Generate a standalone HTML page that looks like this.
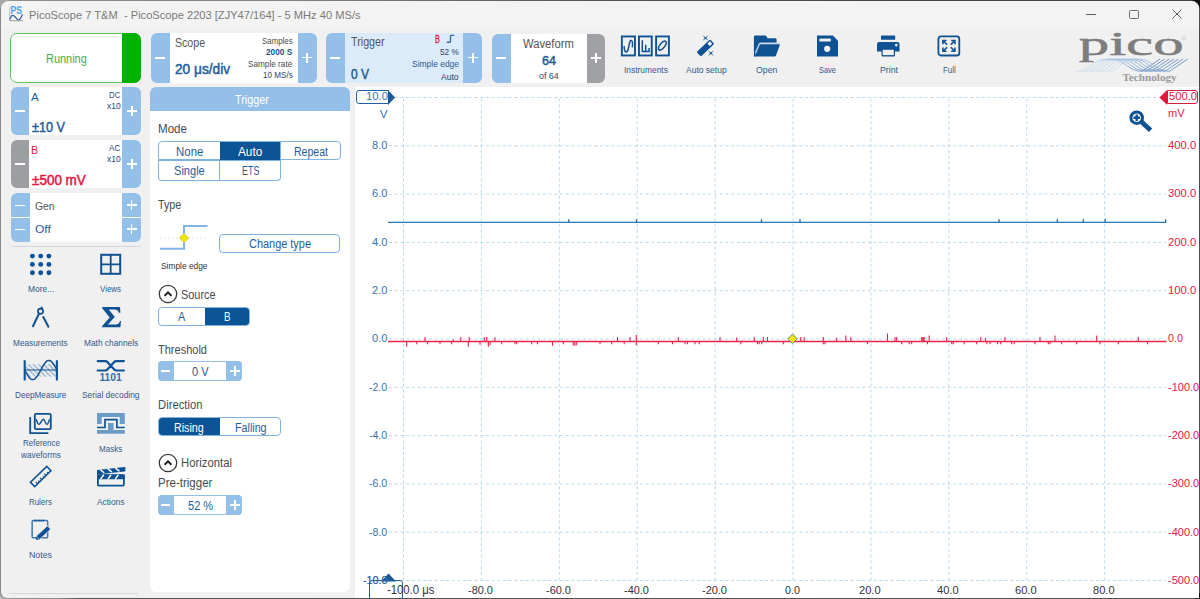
<!DOCTYPE html><html><head><meta charset="utf-8"><style>
html,body{margin:0;padding:0;width:1200px;height:599px;overflow:hidden;background:#1b1b1b}
.r{position:absolute}
.t{position:absolute;white-space:nowrap}
svg text{font-family:"Liberation Sans",sans-serif}
</style></head><body>
<div class="r" style="left:0;top:0;width:1200px;height:599px;background:linear-gradient(90deg,#a9a9a9 0px,#8a8a8a 300px,#303030 600px,#141414 900px,#111 1200px)"></div>
<div class="r" style="left:0;top:597px;width:1200px;height:2px;background:linear-gradient(90deg,#b9b9b9 0px,#9a9a9a 60px,#333 80px,#2a2a2a 1200px)"></div>
<div class="r" style="left:1px;top:1px;width:1198px;height:596.5px;background:#f0f0f0;border-radius:8px 8px 6px 6px;overflow:hidden;box-shadow:0 0 0 0.6px #777">
<div class="r" style="left:0;top:0;width:1198px;height:27.5px;background:#f3f3f3"></div>
</div>
<svg class="r" style="left:9px;top:6px;" width="15" height="16" viewBox="0 0 15 16"><rect x="0.2" y="1" width="1.2" height="13.5" fill="#c3cad6"/><text x="1.4" y="7.7" style="font-weight:700;font-size:10px" fill="#4ea4e6" textLength="11.6" lengthAdjust="spacingAndGlyphs">PS</text><path d="M0.8 13.6 Q2.5 8.4 4.5 9.5 Q6.5 11 8.5 13.7 Q10.5 15.5 13.5 8.3" stroke="#3f5e96" stroke-width="1.2" fill="none"/><rect x="0.5" y="14.2" width="13.5" height="1" fill="#a0a0a0"/></svg>
<div class="t" style="left:28.70px;top:9.67px;font-size:11.5px;line-height:11.5px;color:#7a7a7a;font-weight:400;font-family:'Liberation Sans', sans-serif;transform:scaleX(0.9665);transform-origin:0 0;">PicoScope 7 T&amp;M &nbsp;- PicoScope 2203 [ZJY47/164] - 5 MHz 40 MS/s</div>
<div class="r" style="left:1086px;top:14px;width:10px;height:1px;background:#5f5f5f;"></div>
<div class="r" style="left:1129px;top:9.5px;width:7.5px;height:7.5px;border:1px solid #6a6a6a;border-radius:1.5px"></div>
<svg class="r" style="left:1172px;top:9px;" width="10" height="10" viewBox="0 0 10 10"><path d="M0.5 0.5 L9.5 9.5 M9.5 0.5 L0.5 9.5" stroke="#5f5f5f" stroke-width="1"/></svg>
<div class="r" style="left:10px;top:33px;width:131px;height:50px;border-radius:7px;overflow:hidden;background:#fff;box-sizing:border-box;border:1.5px solid #5fc65f"></div>
<div class="r" style="left:122px;top:33px;width:19px;height:50px;border-radius:0 7px 7px 0;background:#00b200"></div>
<div class="t" style="left:46.30px;top:52.94px;font-size:12px;line-height:12px;color:#3db43d;font-weight:400;font-family:'Liberation Sans', sans-serif;transform:scaleX(0.9128);transform-origin:0 0;">Running</div>
<div class="r" style="left:151px;top:33px;width:165.5px;height:50px;border-radius:6px;overflow:hidden;background:#fff"><div class="r" style="left:0;top:0;width:19px;height:50px;background:#93bfe9"></div><div class="r" style="left:146.5px;top:0;width:19px;height:50px;background:#93bfe9"></div></div>
<div class="r" style="left:155.3px;top:56.849999999999994px;width:10px;height:1.9px;background:#fff;"></div>
<div class="r" style="left:302.0px;top:56.55px;width:10px;height:1.9px;background:#fff;"></div>
<div class="r" style="left:306.05px;top:52.5px;width:1.9px;height:10px;background:#fff;"></div>
<div class="t" style="left:174.70px;top:37.34px;font-size:12px;line-height:12px;color:#555;font-weight:400;font-family:'Liberation Sans', sans-serif;transform:scaleX(0.8824);transform-origin:0 0;">Scope</div>
<div class="t" style="left:174.70px;top:62.25px;font-size:14px;line-height:14px;color:#1f5c9a;font-weight:400;font-family:'Liberation Sans', sans-serif;transform:scaleX(0.9769);transform-origin:0 0;-webkit-text-stroke:0.5px #1f5c9a;">20 μs/div</div>
<div class="t" style="left:261.70px;top:36.36px;font-size:9.5px;line-height:9.5px;color:#4a4a4a;font-weight:400;font-family:'Liberation Sans', sans-serif;transform:scaleX(0.8297);transform-origin:0 0;">Samples</div>
<div class="t" style="left:266.20px;top:47.26px;font-size:9.5px;line-height:9.5px;color:#1d4f85;font-weight:700;font-family:'Liberation Sans', sans-serif;transform:scaleX(0.8704);transform-origin:0 0;">2000 S</div>
<div class="t" style="left:248.20px;top:58.56px;font-size:9.5px;line-height:9.5px;color:#4a4a4a;font-weight:400;font-family:'Liberation Sans', sans-serif;transform:scaleX(0.8633);transform-origin:0 0;">Sample rate</div>
<div class="t" style="left:262.70px;top:69.76px;font-size:9.5px;line-height:9.5px;color:#2b4468;font-weight:400;font-family:'Liberation Sans', sans-serif;transform:scaleX(0.8534);transform-origin:0 0;">10 MS/s</div>
<div class="r" style="left:326px;top:33px;width:156.2px;height:50px;border-radius:6px;overflow:hidden;background:#dcebf9"><div class="r" style="left:0;top:0;width:19px;height:50px;background:#93bfe9"></div><div class="r" style="left:137.2px;top:0;width:19px;height:50px;background:#93bfe9"></div></div>
<div class="r" style="left:330.3px;top:56.849999999999994px;width:10px;height:1.9px;background:#fff;"></div>
<div class="r" style="left:467.8px;top:56.55px;width:10px;height:1.9px;background:#fff;"></div>
<div class="r" style="left:471.85px;top:52.5px;width:1.9px;height:10px;background:#fff;"></div>
<div class="t" style="left:350.70px;top:36.34px;font-size:12px;line-height:12px;color:#555;font-weight:400;font-family:'Liberation Sans', sans-serif;transform:scaleX(0.8963);transform-origin:0 0;">Trigger</div>
<div class="t" style="left:350.70px;top:67.45px;font-size:14px;line-height:14px;color:#1f5c9a;font-weight:400;font-family:'Liberation Sans', sans-serif;transform:scaleX(0.8571);transform-origin:0 0;-webkit-text-stroke:0.5px #1f5c9a;">0 V</div>
<div class="t" style="left:435.10px;top:34.80px;font-size:10.4px;line-height:10.4px;color:#e8103c;font-weight:400;font-family:'Liberation Sans', sans-serif;transform:scaleX(0.6957);transform-origin:0 0;-webkit-text-stroke:0.3px #e8103c;">B</div>
<svg class="r" style="left:446px;top:34px;" width="10" height="10" viewBox="0 0 10 10"><path d="M1.3 8.2 H3.9 Q4.5 8.2 4.5 7.6 V2 Q4.5 1.4 5.1 1.4 H7.7" stroke="#386ca4" stroke-width="1.4" fill="none" stroke-linecap="round"/></svg>
<div class="t" style="left:440.00px;top:47.26px;font-size:9.5px;line-height:9.5px;color:#2b4468;font-weight:400;font-family:'Liberation Sans', sans-serif;transform:scaleX(0.8618);transform-origin:0 0;">52 %</div>
<div class="t" style="left:411.70px;top:59.26px;font-size:9.5px;line-height:9.5px;color:#2b5a8a;font-weight:400;font-family:'Liberation Sans', sans-serif;transform:scaleX(0.8902);transform-origin:0 0;">Simple edge</div>
<div class="t" style="left:441.20px;top:72.06px;font-size:9.5px;line-height:9.5px;color:#2b4468;font-weight:400;font-family:'Liberation Sans', sans-serif;transform:scaleX(0.8974);transform-origin:0 0;">Auto</div>
<div class="r" style="left:492px;top:33.6px;width:113.2px;height:49.5px;border-radius:6px;overflow:hidden;background:#fff"><div class="r" style="left:0;top:0;width:19px;height:49.5px;background:#93bfe9"></div><div class="r" style="left:94.7px;top:0;width:18.5px;height:49.5px;background:#a0a1a5"></div></div>
<div class="r" style="left:496.3px;top:57.05px;width:10px;height:1.9px;background:#fff;"></div>
<div class="r" style="left:591.2px;top:57.05px;width:10px;height:1.9px;background:#fff;"></div>
<div class="r" style="left:595.25px;top:53.0px;width:1.9px;height:10px;background:#fff;"></div>
<div class="t" style="left:523.20px;top:38.24px;font-size:12px;line-height:12px;color:#555;font-weight:400;font-family:'Liberation Sans', sans-serif;transform:scaleX(0.9373);transform-origin:0 0;">Waveform</div>
<div class="t" style="left:541.60px;top:53.57px;font-size:13.5px;line-height:13.5px;color:#1f5c9a;font-weight:400;font-family:'Liberation Sans', sans-serif;transform:scaleX(0.9333);transform-origin:0 0;-webkit-text-stroke:0.5px #1f5c9a;">64</div>
<div class="t" style="left:538.80px;top:70.56px;font-size:9.5px;line-height:9.5px;color:#2b4468;font-weight:400;font-family:'Liberation Sans', sans-serif;transform:scaleX(0.9289);transform-origin:0 0;">of 64</div>
<div class="t" style="left:623.50px;top:64.87px;font-size:9.6px;line-height:9.6px;color:#33598a;font-weight:400;font-family:'Liberation Sans', sans-serif;transform:scaleX(0.8745);transform-origin:0 0;">Instruments</div>
<div class="t" style="left:685.80px;top:64.87px;font-size:9.6px;line-height:9.6px;color:#33598a;font-weight:400;font-family:'Liberation Sans', sans-serif;transform:scaleX(0.8867);transform-origin:0 0;">Auto setup</div>
<div class="t" style="left:756.00px;top:64.87px;font-size:9.6px;line-height:9.6px;color:#33598a;font-weight:400;font-family:'Liberation Sans', sans-serif;transform:scaleX(0.9106);transform-origin:0 0;">Open</div>
<div class="t" style="left:819.00px;top:64.87px;font-size:9.6px;line-height:9.6px;color:#33598a;font-weight:400;font-family:'Liberation Sans', sans-serif;transform:scaleX(0.7763);transform-origin:0 0;">Save</div>
<div class="t" style="left:879.50px;top:64.87px;font-size:9.6px;line-height:9.6px;color:#33598a;font-weight:400;font-family:'Liberation Sans', sans-serif;transform:scaleX(0.9086);transform-origin:0 0;">Print</div>
<div class="t" style="left:942.60px;top:64.87px;font-size:9.6px;line-height:9.6px;color:#33598a;font-weight:400;font-family:'Liberation Sans', sans-serif;transform:scaleX(0.8194);transform-origin:0 0;">Full</div>
<svg class="r" style="left:620px;top:35px;" width="51" height="22" viewBox="0 0 51 22"><g fill="none" stroke="#0f5294" stroke-width="1.9"><rect x="1.85" y="1.45" width="13.1" height="19"/><rect x="18.95" y="1.45" width="12.8" height="19"/><rect x="36.1" y="1.45" width="12.8" height="19"/><path d="M4.1 11 C4.3 19 7.5 18.5 8.7 12 C9.5 7 10.3 5 11.3 5.2 C12.5 5.4 12.6 9 12.4 12.4" stroke-width="1.5"/><path d="M22.3 16.6 V5.2 M25.7 16.6 V9.7 M29.1 16.6 V13.1 M21.6 16.6 H29.8" stroke-width="1.5"/><ellipse cx="42.4" cy="10.6" rx="5.3" ry="2.4" transform="rotate(-52 42.4 10.6)" stroke-width="1.6"/></g></svg>
<svg class="r" style="left:695px;top:34px;" width="22" height="24" viewBox="0 0 22 24"><g transform="translate(10.4 13.9) rotate(-43.6)"><rect x="-9.3" y="-3.1" width="18.6" height="6.2" rx="1.3" fill="#0f5294"/><rect x="4.4" y="-1.7" width="3.4" height="3.4" rx="0.7" fill="#fff"/></g><g fill="#0f5294"><path d="M10.5 4 m-2.8 -2.8 L10.5 3.2 L13.3 1.2 L11.3 4 L13.3 6.8 L10.5 4.8 L7.7 6.8 L9.7 4 Z"/><path d="M15.9 19.2 m-2.8 -2.8 L15.9 18.4 L18.7 16.4 L16.7 19.2 L18.7 22 L15.9 20 L13.1 22 L15.1 19.2 Z"/></g></svg>
<svg class="r" style="left:753px;top:35px;" width="28" height="22" viewBox="0 0 28 22"><path d="M0.9 1.6 Q0.9 0.6 1.9 0.6 H12.3 Q13.1 0.6 13.6 1.4 L14.5 3.3 H22.4 Q23.6 3.3 23.6 4.5 V8 H7 L2.6 19 L2.6 21.4 H0.9 Z" fill="#0f5294"/><path d="M2.4 18 L6.1 9.3 Q6.6 8.2 7.8 8.2 H26.6" stroke="#c3d3e4" stroke-width="1.3" fill="none"/><path d="M7.9 9.2 H26.2 Q27.1 9.2 26.8 10.1 L23 20.6 Q22.7 21.4 21.9 21.4 H1.9 L6.6 10 Q7 9.2 7.9 9.2 Z" fill="#0f5294"/></svg>
<svg class="r" style="left:817px;top:35px;" width="22" height="22" viewBox="0 0 22 22"><path d="M0 0.4 H15.8 L21 5.8 V21.4 H0 Z" fill="#0f5294"/><rect x="2.4" y="3.6" width="11.4" height="2.9" fill="#f2f2f2"/><circle cx="10.2" cy="13.8" r="3.1" fill="#f2f2f2"/></svg>
<svg class="r" style="left:876px;top:35px;" width="24" height="22" viewBox="0 0 24 22"><rect x="5" y="0.5" width="14.2" height="4.3" rx="0.6" fill="#0f5294"/><path d="M1 9.2 Q1 7 3.2 7 H21.3 Q23.5 7 23.5 9.2 V16.6 H1 Z" fill="#0f5294"/><rect x="5.5" y="13.6" width="13.5" height="7.8" rx="0.8" fill="#0f5294"/><rect x="6.7" y="14.8" width="11.1" height="5.3" fill="#f0f0f0"/><circle cx="20.3" cy="10.1" r="1.3" fill="#f0f0f0"/></svg>
<svg class="r" style="left:937px;top:35px;" width="24" height="22" viewBox="0 0 24 22"><rect x="1.4" y="1.3" width="20.9" height="19.2" rx="2.6" fill="none" stroke="#0f5294" stroke-width="1.8"/><g stroke="#0f5294" stroke-width="1.6" fill="none"><path d="M6.2 5.8 L10 9.6 M5.9 9.2 V5.5 H9.6"/><path d="M17.6 5.8 L13.8 9.6 M17.9 9.2 V5.5 H14.2"/><path d="M6.2 16 L10 12.2 M5.9 12.6 V16.3 H9.6"/><path d="M17.6 16 L13.8 12.2 M17.9 12.6 V16.3 H14.2"/></g></svg>
<svg class="r" style="left:1072px;top:30px;" width="120" height="56" viewBox="0 0 120 56"><defs><linearGradient id="wg" x1="0" y1="0" x2="1" y2="0" gradientUnits="objectBoundingBox"><stop offset="0" stop-color="#d5e4f3"/><stop offset="0.45" stop-color="#8fb6e0"/><stop offset="1" stop-color="#3f6fa8"/></linearGradient></defs><text x="6.7" y="24.8" style="font-family:'Liberation Serif';font-weight:400;font-size:34px" fill="#7d7d7d" stroke="#7d7d7d" stroke-width="0.5" textLength="105" lengthAdjust="spacingAndGlyphs">pico</text><circle cx="112" cy="8.5" r="1.6" fill="none" stroke="#b0b0b0" stroke-width="0.5"/><g fill="none" stroke-width="0.75"><path d="M2.0 41.7 C18.0 41.7 22.0 29.2 33.0 29.2 H40.0 C52.0 29.2 56.0 41.3 70.0 41.3 L88.0 29" stroke="url(#wg)"/><path d="M7.5 41.7 C22.6 41.7 26.6 29.2 37.6 29.2 H44.6 C56.6 29.2 60.6 41.3 74.6 41.3 L92.6 29" stroke="url(#wg)"/><path d="M13.0 41.7 C27.2 41.7 31.2 29.2 42.2 29.2 H49.2 C61.2 29.2 65.2 41.3 79.2 41.3 L97.2 29" stroke="url(#wg)"/><path d="M18.6 41.7 C31.8 41.7 35.8 29.2 46.8 29.2 H53.8 C65.8 29.2 69.8 41.3 83.8 41.3 L101.8 29" stroke="url(#wg)"/><path d="M24.1 41.7 C36.4 41.7 40.4 29.2 51.4 29.2 H58.4 C70.4 29.2 74.4 41.3 88.4 41.3 L106.4 29" stroke="url(#wg)"/><path d="M29.6 41.7 C41.0 41.7 45.0 29.2 56.0 29.2 H63.0 C75.0 29.2 79.0 41.3 93.0 41.3 L111.0 29" stroke="url(#wg)"/><path d="M35.1 41.7 C45.6 41.7 49.6 29.2 60.6 29.2 H67.6 C79.6 29.2 83.6 41.3 97.6 41.3 L115.6 29" stroke="url(#wg)"/></g><text x="50.4" y="51" style="font-family:'Liberation Serif';font-weight:700;font-size:9.6px" fill="#9b9b9b" textLength="54.3" lengthAdjust="spacingAndGlyphs">Technology</text></svg>
<div class="r" style="left:10.5px;top:87.1px;width:130.5px;height:48.2px;border-radius:6px;overflow:hidden;background:#fff"><div class="r" style="left:0;top:0;width:18.5px;height:48.2px;background:#93bfe9"></div><div class="r" style="left:111.3px;top:0;width:19.2px;height:48.2px;background:#93bfe9"></div></div>
<div class="r" style="left:14.899999999999999px;top:110.35px;width:10px;height:1.9px;background:#fff;"></div>
<div class="r" style="left:126.69999999999999px;top:110.35px;width:10px;height:1.9px;background:#fff;"></div>
<div class="r" style="left:130.75px;top:106.3px;width:1.9px;height:10px;background:#fff;"></div>
<div class="t" style="left:31.25px;top:92.37px;font-size:11.5px;line-height:11.5px;color:#1f5c9a;font-weight:400;font-family:'Liberation Sans', sans-serif;transform:scaleX(1.0065);transform-origin:0 0;">A</div>
<div class="t" style="left:109.35px;top:90.31px;font-size:9.5px;line-height:9.5px;color:#2a4d75;font-weight:400;font-family:'Liberation Sans', sans-serif;transform:scaleX(0.8212);transform-origin:0 0;">DC</div>
<div class="t" style="left:106.85px;top:100.96px;font-size:9.5px;line-height:9.5px;color:#2a4d75;font-weight:400;font-family:'Liberation Sans', sans-serif;transform:scaleX(0.8987);transform-origin:0 0;">x10</div>
<div class="t" style="left:32.25px;top:120.25px;font-size:14px;line-height:14px;color:#1f5c9a;font-weight:400;font-family:'Liberation Sans', sans-serif;transform:scaleX(0.9041);transform-origin:0 0;-webkit-text-stroke:0.5px #1f5c9a;">±10 V</div>
<div class="r" style="left:10.5px;top:140.1px;width:130.5px;height:48.2px;border-radius:6px;overflow:hidden;background:#fff"><div class="r" style="left:0;top:0;width:18.5px;height:48.2px;background:#9d9ea2"></div><div class="r" style="left:111.3px;top:0;width:19.2px;height:48.2px;background:#93bfe9"></div></div>
<div class="r" style="left:14.899999999999999px;top:163.35px;width:10px;height:1.9px;background:#fff;"></div>
<div class="r" style="left:126.69999999999999px;top:163.35px;width:10px;height:1.9px;background:#fff;"></div>
<div class="r" style="left:130.75px;top:159.29999999999998px;width:1.9px;height:10px;background:#fff;"></div>
<div class="t" style="left:31.25px;top:145.37px;font-size:11.5px;line-height:11.5px;color:#e3173e;font-weight:400;font-family:'Liberation Sans', sans-serif;transform:scaleX(0.9351);transform-origin:0 0;">B</div>
<div class="t" style="left:109.35px;top:143.31px;font-size:9.5px;line-height:9.5px;color:#2a4d75;font-weight:400;font-family:'Liberation Sans', sans-serif;transform:scaleX(0.8523);transform-origin:0 0;">AC</div>
<div class="t" style="left:106.85px;top:153.96px;font-size:9.5px;line-height:9.5px;color:#2a4d75;font-weight:400;font-family:'Liberation Sans', sans-serif;transform:scaleX(0.8987);transform-origin:0 0;">x10</div>
<div class="t" style="left:32.00px;top:172.85px;font-size:14px;line-height:14px;color:#e3173e;font-weight:400;font-family:'Liberation Sans', sans-serif;transform:scaleX(0.9624);transform-origin:0 0;-webkit-text-stroke:0.5px #e3173e;">±500 mV</div>
<div class="r" style="left:10.5px;top:193.3px;width:130.5px;height:48.4px;border-radius:6px;overflow:hidden;background:#fff"><div class="r" style="left:0;top:0;width:19.2px;height:48.4px;background:#93bfe9"></div><div class="r" style="left:111.3px;top:0;width:19.2px;height:48.4px;background:#93bfe9"></div></div>
<div class="r" style="left:10.5px;top:217.2px;width:19.2px;height:1px;background:#fff;"></div>
<div class="r" style="left:121.8px;top:217.2px;width:19.2px;height:1px;background:#fff;"></div>
<div class="r" style="left:15.3px;top:204.55px;width:10px;height:1.9px;background:#fff;"></div>
<div class="r" style="left:126.5px;top:204.35000000000002px;width:10px;height:1.9px;background:#fff;"></div>
<div class="r" style="left:130.55px;top:200.3px;width:1.9px;height:10px;background:#fff;"></div>
<div class="r" style="left:15.3px;top:228.55px;width:10px;height:1.9px;background:#fff;"></div>
<div class="r" style="left:126.5px;top:228.35000000000002px;width:10px;height:1.9px;background:#fff;"></div>
<div class="r" style="left:130.55px;top:224.3px;width:1.9px;height:10px;background:#fff;"></div>
<div class="t" style="left:34.75px;top:201.37px;font-size:11.5px;line-height:11.5px;color:#555;font-weight:400;font-family:'Liberation Sans', sans-serif;transform:scaleX(0.9032);transform-origin:0 0;">Gen</div>
<div class="t" style="left:34.75px;top:224.47px;font-size:11.5px;line-height:11.5px;color:#1f5c9a;font-weight:400;font-family:'Liberation Sans', sans-serif;transform:scaleX(1.0461);transform-origin:0 0;">Off</div>
<div class="r" style="left:12px;top:246px;width:129px;height:1.2px;background:#d6d6d6;"></div>
<div class="t" style="left:27.50px;top:284.06px;font-size:9.5px;line-height:9.5px;color:#33598a;font-weight:400;font-family:'Liberation Sans', sans-serif;transform:scaleX(0.8885);transform-origin:0 0;">More...</div>
<div class="t" style="left:100.20px;top:284.06px;font-size:9.5px;line-height:9.5px;color:#33598a;font-weight:400;font-family:'Liberation Sans', sans-serif;transform:scaleX(0.8333);transform-origin:0 0;">Views</div>
<div class="t" style="left:13.20px;top:337.66px;font-size:9.5px;line-height:9.5px;color:#33598a;font-weight:400;font-family:'Liberation Sans', sans-serif;transform:scaleX(0.8694);transform-origin:0 0;">Measurements</div>
<div class="t" style="left:83.60px;top:337.66px;font-size:9.5px;line-height:9.5px;color:#33598a;font-weight:400;font-family:'Liberation Sans', sans-serif;transform:scaleX(0.8770);transform-origin:0 0;">Math channels</div>
<div class="t" style="left:15.10px;top:390.16px;font-size:9.5px;line-height:9.5px;color:#33598a;font-weight:400;font-family:'Liberation Sans', sans-serif;transform:scaleX(0.8610);transform-origin:0 0;">DeepMeasure</div>
<div class="t" style="left:82.00px;top:390.16px;font-size:9.5px;line-height:9.5px;color:#33598a;font-weight:400;font-family:'Liberation Sans', sans-serif;transform:scaleX(0.8763);transform-origin:0 0;">Serial decoding</div>
<div class="t" style="left:22.50px;top:438.06px;font-size:9.5px;line-height:9.5px;color:#33598a;font-weight:400;font-family:'Liberation Sans', sans-serif;transform:scaleX(0.8447);transform-origin:0 0;">Reference</div>
<div class="t" style="left:21.09px;top:449.56px;font-size:9.5px;line-height:9.5px;color:#33598a;font-weight:400;font-family:'Liberation Sans', sans-serif;transform:scaleX(0.8696);transform-origin:0 0;">waveforms</div>
<div class="t" style="left:99.00px;top:443.66px;font-size:9.5px;line-height:9.5px;color:#33598a;font-weight:400;font-family:'Liberation Sans', sans-serif;transform:scaleX(0.8504);transform-origin:0 0;">Masks</div>
<div class="t" style="left:29.30px;top:496.76px;font-size:9.5px;line-height:9.5px;color:#33598a;font-weight:400;font-family:'Liberation Sans', sans-serif;transform:scaleX(0.8327);transform-origin:0 0;">Rulers</div>
<div class="t" style="left:97.20px;top:496.76px;font-size:9.5px;line-height:9.5px;color:#33598a;font-weight:400;font-family:'Liberation Sans', sans-serif;transform:scaleX(0.8814);transform-origin:0 0;">Actions</div>
<div class="t" style="left:29.30px;top:549.96px;font-size:9.5px;line-height:9.5px;color:#33598a;font-weight:400;font-family:'Liberation Sans', sans-serif;transform:scaleX(0.9234);transform-origin:0 0;">Notes</div>
<svg class="r" style="left:29px;top:253px;" width="24" height="23" viewBox="0 0 24 23"><circle cx="3.4" cy="3.1" r="2.45" fill="#0f5294"/><circle cx="3.4" cy="11.4" r="2.45" fill="#0f5294"/><circle cx="3.4" cy="19.7" r="2.45" fill="#0f5294"/><circle cx="11.7" cy="3.1" r="2.45" fill="#0f5294"/><circle cx="11.7" cy="11.4" r="2.45" fill="#0f5294"/><circle cx="11.7" cy="19.7" r="2.45" fill="#0f5294"/><circle cx="19.9" cy="3.1" r="2.45" fill="#0f5294"/><circle cx="19.9" cy="11.4" r="2.45" fill="#0f5294"/><circle cx="19.9" cy="19.7" r="2.45" fill="#0f5294"/></svg>
<svg class="r" style="left:99px;top:253px;" width="24" height="23" viewBox="0 0 24 23"><rect x="2.2" y="1.8" width="19" height="19" fill="none" stroke="#0f5294" stroke-width="2"/><path d="M11.7 1.8 V20.8 M2.2 11.3 H21.2" stroke="#0f5294" stroke-width="1.8"/></svg>
<svg class="r" style="left:30px;top:306px;" width="21" height="23" viewBox="0 0 21 23"><circle cx="10.5" cy="5.3" r="2.6" fill="none" stroke="#0f5294" stroke-width="1.7"/><path d="M8.8 8 L3 20.3 M13.3 11 L18.4 20.8 M11.6 1.6 L12.1 2.8" stroke="#0f5294" stroke-width="2" stroke-linecap="round"/></svg>
<svg class="r" style="left:101px;top:306px;" width="21" height="23" viewBox="0 0 21 23"><path d="M1.2 1 H19 L19.4 6.8 H17.8 Q17 3.6 13.5 3.6 H7.8 L13.8 11 L6.8 18.6 H14.5 Q18 18.6 19 15 H20 L19.4 21.3 H1 V20.3 L8.7 11.6 L1.2 2.2 Z" fill="#0f5294"/></svg>
<svg class="r" style="left:22px;top:359px;" width="37" height="23" viewBox="0 0 37 23"><defs><pattern id="hp" width="3.6" height="3.6" patternUnits="userSpaceOnUse" patternTransform="rotate(-45)"><rect width="1.3" height="3.6" fill="#93b1d3"/></pattern></defs><rect x="3.7" y="5.2" width="31" height="12.4" fill="url(#hp)"/><path d="M2.7 1.2 V21.5 M34.9 1.2 V21.5" stroke="#0f5294" stroke-width="2.1"/><path d="M2.7 11 H34.9" stroke="#0f5294" stroke-width="1.1"/><polyline points="2.70,11.00 3.50,12.50 4.31,13.97 5.12,15.36 5.92,16.64 6.72,17.79 7.53,18.77 8.33,19.55 9.14,20.13 9.95,20.48 10.75,20.60 11.55,20.48 12.36,20.13 13.16,19.55 13.97,18.77 14.77,17.79 15.58,16.64 16.38,15.36 17.19,13.97 17.99,12.50 18.80,11.00 19.60,9.50 20.41,8.03 21.21,6.64 22.02,5.36 22.82,4.21 23.63,3.23 24.43,2.45 25.24,1.87 26.04,1.52 26.85,1.40 27.65,1.52 28.46,1.87 29.26,2.45 30.07,3.23 30.87,4.21 31.68,5.36 32.48,6.64 33.29,8.03 34.09,9.50 34.90,11.00" stroke="#0f5294" stroke-width="1.5" fill="none"/></svg>
<svg class="r" style="left:96px;top:359px;" width="30" height="23" viewBox="0 0 30 23"><path d="M1.7 2.1 H9.5 Q10.6 2.1 11.6 3.2 L18 10.3 Q19 11.5 20.2 11.5 H27.9 M1.7 11.5 H9.5 Q10.6 11.5 11.6 10.3 L18 3.2 Q19 2.1 20.2 2.1 H27.9" stroke="#0f5294" stroke-width="2.2" fill="none" stroke-linecap="round"/><text x="3.4" y="21.5" style="font-weight:700;font-size:10.2px" fill="#2f6dab" textLength="22.2" lengthAdjust="spacingAndGlyphs">1101</text></svg>
<svg class="r" style="left:28px;top:412px;" width="26" height="23" viewBox="0 0 26 23"><rect x="6.8" y="1.9" width="16" height="15.3" rx="1.2" fill="none" stroke="#0f5294" stroke-width="1.8"/><path d="M2.2 5 V21.1 H20.4" fill="none" stroke="#0f5294" stroke-width="1.8"/><path d="M7.6 6.9 C8.6 6.9 9.6 12.5 10.9 12.5 C12.4 12.5 13.8 7.3 15.3 7.3 C16.8 7.3 17.6 12.5 19 12.5 C20.4 12.5 21 7.3 21.8 7.3" fill="none" stroke="#0f5294" stroke-width="1.5"/></svg>
<svg class="r" style="left:96px;top:413px;" width="30" height="21" viewBox="0 0 30 21"><path d="M1 0 H28.8 V11 H23.7 V4 H5.7 V11 H1 Z" fill="#6b9cc7"/><path d="M1 17.1 H28.8 V20.8 H1 Z M12 9.9 H17.6 V17.1 H12 Z" fill="#6b9cc7"/><path d="M1 14.5 H9 V6.6 H20.9 V14.5 H28.8" stroke="#0f5294" stroke-width="1.7" fill="none"/></svg>
<svg class="r" style="left:29px;top:465px;" width="24" height="23" viewBox="0 0 24 23"><g transform="translate(11.7 11.5) rotate(-44.5)"><rect x="-11.4" y="-3" width="22.8" height="6" fill="none" stroke="#0f5294" stroke-width="1.6"/><path d="M-7.5 3 V0.6 M-4.5 3 V1.4 M-1.5 3 V0.6 M1.5 3 V1.4 M4.5 3 V0.6 M7.5 3 V1.4" stroke="#0f5294" stroke-width="1.2"/></g></svg>
<svg class="r" style="left:95px;top:465px;" width="31" height="23" viewBox="0 0 31 23"><rect x="2.9" y="10.2" width="26" height="10.4" rx="1" fill="none" stroke="#0f5294" stroke-width="1.8"/><rect x="2" y="9.4" width="27.8" height="4.9" rx="0.8" fill="#0f5294"/><path d="M2 4.9 L29.6 1.9 Q30.4 1.8 30.4 2.8 L30.4 5.6 Q30.4 6.4 29.6 6.5 L2 9.5 Z" fill="#0f5294"/><path d="M6 13.6 L8.4 10.2 M13.3 13.6 L15.7 10.2 M20.6 13.6 L23 10.2" stroke="#fff" stroke-width="1.5" stroke-linecap="round"/><path d="M5.6 5 L8.8 7.5 M13.2 4.2 L16.4 6.7 M20.8 3.4 L24 5.9" stroke="#fff" stroke-width="1.5" stroke-linecap="round"/></svg>
<svg class="r" style="left:30px;top:518px;" width="22" height="23" viewBox="0 0 22 23"><rect x="2.15" y="2.45" width="15.5" height="17.4" rx="1.2" fill="none" stroke="#3d78b3" stroke-width="1.5"/><path d="M4 2.6 H15" stroke="#0f5294" stroke-width="1.6" stroke-dasharray="1.4 0.8"/><g transform="translate(13.2 14.9) rotate(-43)"><rect x="-7.5" y="-2.4" width="15.5" height="4.8" rx="0.8" fill="#0f5294" stroke="#f0f0f0" stroke-width="0.8"/><path d="M-7.8 -2.2 L-10 0 L-7.8 2.2 Z" fill="#0f5294"/></g></svg>
<div class="r" style="left:8.5px;top:593px;width:129.5px;height:1.2px;background:#d8d8d8;"></div>
<div class="r" style="left:150px;top:87.3px;width:200px;height:504.4px;background:#fff;border-radius:6px;overflow:hidden"><div class="r" style="left:0;top:0;width:200px;height:23.3px;background:#93bfe9"></div></div>
<div class="t" style="left:234.50px;top:93.74px;font-size:12px;line-height:12px;color:#fff;font-weight:400;font-family:'Liberation Sans', sans-serif;transform:scaleX(0.9043);transform-origin:0 0;">Trigger</div>
<div class="t" style="left:158.30px;top:123.04px;font-size:12px;line-height:12px;color:#4a4a4a;font-weight:400;font-family:'Liberation Sans', sans-serif;transform:scaleX(0.9667);transform-origin:0 0;">Mode</div>
<div class="r" style="left:158.3px;top:140.5px;width:182.7px;height:19.6px;box-sizing:border-box;border:1px solid #7fb2e3;border-radius:4px 4px 4px 0"></div>
<div class="r" style="left:158.3px;top:159.6px;width:122.6px;height:21.6px;box-sizing:border-box;border:1px solid #7fb2e3;border-top:none;border-radius:0 0 4px 4px"></div>
<div class="r" style="left:219.8px;top:141.5px;width:61.1px;height:18.6px;background:#0b5596;"></div>
<div class="r" style="left:219.3px;top:159.6px;width:1px;height:21px;background:#7fb2e3;"></div>
<div class="r" style="left:280.4px;top:141px;width:1px;height:19px;background:#7fb2e3;"></div>
<div class="r" style="left:158.3px;top:159.6px;width:122.6px;height:1px;background:#7fb2e3;"></div>
<div class="t" style="left:175.80px;top:145.64px;font-size:12px;line-height:12px;color:#1f5c9a;font-weight:400;font-family:'Liberation Sans', sans-serif;transform:scaleX(0.9547);transform-origin:0 0;">None</div>
<div class="t" style="left:238.20px;top:145.64px;font-size:12px;line-height:12px;color:#fff;font-weight:400;font-family:'Liberation Sans', sans-serif;transform:scaleX(0.9798);transform-origin:0 0;">Auto</div>
<div class="t" style="left:294.00px;top:145.64px;font-size:12px;line-height:12px;color:#1f5c9a;font-weight:400;font-family:'Liberation Sans', sans-serif;transform:scaleX(0.8786);transform-origin:0 0;">Repeat</div>
<div class="t" style="left:174.10px;top:165.24px;font-size:12px;line-height:12px;color:#1f5c9a;font-weight:400;font-family:'Liberation Sans', sans-serif;transform:scaleX(0.9222);transform-origin:0 0;">Single</div>
<div class="t" style="left:241.65px;top:165.24px;font-size:12px;line-height:12px;color:#1f5c9a;font-weight:400;font-family:'Liberation Sans', sans-serif;transform:scaleX(0.7425);transform-origin:0 0;">ETS</div>
<div class="t" style="left:158.30px;top:198.74px;font-size:12px;line-height:12px;color:#4a4a4a;font-weight:400;font-family:'Liberation Sans', sans-serif;transform:scaleX(0.8923);transform-origin:0 0;">Type</div>
<svg class="r" style="left:159px;top:224px;" width="50" height="27" viewBox="0 0 50 27"><path d="M1 24.7 H25 V2.1 H48.5" stroke="#82b4e4" stroke-width="2" fill="none"/><path d="M1 14 H48" stroke="#c9c9c9" stroke-width="0.8" stroke-dasharray="1.5 2.5"/><path d="M25 9.3 L29.6 14 L25 18.7 L20.4 14 Z" fill="#f2e600" stroke="#b9b05a" stroke-width="0.6"/></svg>
<div class="t" style="left:160.50px;top:261.06px;font-size:9.5px;line-height:9.5px;color:#333;font-weight:400;font-family:'Liberation Sans', sans-serif;transform:scaleX(0.8807);transform-origin:0 0;">Simple edge</div>
<div class="r" style="left:219.3px;top:233.5px;width:121.1px;height:19.8px;box-sizing:border-box;border:1px solid #7fb2e3;border-radius:4px"></div>
<div class="t" style="left:249.00px;top:237.82px;font-size:12.5px;line-height:12.5px;color:#1f5c9a;font-weight:400;font-family:'Liberation Sans', sans-serif;transform:scaleX(0.8745);transform-origin:0 0;">Change type</div>
<svg class="r" style="left:158.1px;top:284.1px;" width="20" height="20" viewBox="0 0 20 20"><circle cx="10" cy="10" r="8.7" fill="none" stroke="#3a3a3a" stroke-width="1.3"/><path d="M6.6 11.8 L10 8.4 L13.4 11.8" fill="none" stroke="#222" stroke-width="2"/></svg>
<div class="t" style="left:181.30px;top:288.74px;font-size:12px;line-height:12px;color:#4a4a4a;font-weight:400;font-family:'Liberation Sans', sans-serif;transform:scaleX(0.9079);transform-origin:0 0;">Source</div>
<div class="r" style="left:158.3px;top:306.6px;width:92.2px;height:19.6px;box-sizing:border-box;border:1px solid #7fb2e3;border-radius:4px;overflow:hidden"><div class="r" style="left:45.3px;top:-1px;width:47px;height:20px;background:#0b5596"></div></div>
<div class="t" style="left:177.90px;top:311.14px;font-size:12px;line-height:12px;color:#1f5c9a;font-weight:400;font-family:'Liberation Sans', sans-serif;transform:scaleX(0.9000);transform-origin:0 0;">A</div>
<div class="t" style="left:224.05px;top:311.14px;font-size:12px;line-height:12px;color:#fff;font-weight:400;font-family:'Liberation Sans', sans-serif;transform:scaleX(0.8125);transform-origin:0 0;">B</div>
<div class="t" style="left:158.30px;top:343.84px;font-size:12px;line-height:12px;color:#4a4a4a;font-weight:400;font-family:'Liberation Sans', sans-serif;transform:scaleX(0.9176);transform-origin:0 0;">Threshold</div>
<div class="r" style="left:158.3px;top:361.1px;width:84.1px;height:20.2px;border-radius:4px;overflow:hidden;background:#fff"><div class="r" style="left:0;top:0;width:15.1px;height:20.2px;background:#93bfe9"></div><div class="r" style="left:69.0px;top:0;width:15.1px;height:20.2px;background:#93bfe9"></div></div>
<div class="r" style="left:173.4px;top:361.1px;width:53.9px;height:20.2px;box-sizing:border-box;border:1px solid #93bfe9"></div>
<div class="r" style="left:161.35000000000002px;top:370.1px;width:9px;height:2.2px;background:#fff;"></div>
<div class="r" style="left:229.85px;top:370.1px;width:10px;height:2.2px;background:#fff;"></div>
<div class="r" style="left:233.75px;top:366.20000000000005px;width:2.2px;height:10px;background:#fff;"></div>
<div class="t" style="left:192.10px;top:366.24px;font-size:12px;line-height:12px;color:#1f5c9a;font-weight:400;font-family:'Liberation Sans', sans-serif;transform:scaleX(0.9167);transform-origin:0 0;">0 V</div>
<div class="t" style="left:158.40px;top:398.84px;font-size:12px;line-height:12px;color:#4a4a4a;font-weight:400;font-family:'Liberation Sans', sans-serif;transform:scaleX(0.9387);transform-origin:0 0;">Direction</div>
<div class="r" style="left:158.4px;top:416.5px;width:123px;height:19.9px;box-sizing:border-box;border:1px solid #7fb2e3;border-radius:4px;overflow:hidden"><div class="r" style="left:-1px;top:-1px;width:61.8px;height:20px;background:#0b5596"></div></div>
<div class="t" style="left:173.95px;top:421.64px;font-size:12px;line-height:12px;color:#fff;font-weight:400;font-family:'Liberation Sans', sans-serif;transform:scaleX(0.8919);transform-origin:0 0;">Rising</div>
<div class="t" style="left:234.55px;top:421.64px;font-size:12px;line-height:12px;color:#1f5c9a;font-weight:400;font-family:'Liberation Sans', sans-serif;transform:scaleX(0.8924);transform-origin:0 0;">Falling</div>
<svg class="r" style="left:157.8px;top:452.7px;" width="20" height="20" viewBox="0 0 20 20"><circle cx="10" cy="10" r="8.7" fill="none" stroke="#3a3a3a" stroke-width="1.3"/><path d="M6.6 11.8 L10 8.4 L13.4 11.8" fill="none" stroke="#222" stroke-width="2"/></svg>
<div class="t" style="left:181.20px;top:457.44px;font-size:12px;line-height:12px;color:#4a4a4a;font-weight:400;font-family:'Liberation Sans', sans-serif;transform:scaleX(0.9444);transform-origin:0 0;">Horizontal</div>
<div class="t" style="left:158.40px;top:476.94px;font-size:12px;line-height:12px;color:#4a4a4a;font-weight:400;font-family:'Liberation Sans', sans-serif;transform:scaleX(0.9594);transform-origin:0 0;">Pre-trigger</div>
<div class="r" style="left:158.4px;top:495.2px;width:84px;height:20.2px;border-radius:4px;overflow:hidden;background:#fff"><div class="r" style="left:0;top:0;width:14.6px;height:20.2px;background:#93bfe9"></div><div class="r" style="left:69px;top:0;width:15px;height:20.2px;background:#93bfe9"></div></div>
<div class="r" style="left:173.0px;top:495.2px;width:54.400000000000006px;height:20.2px;box-sizing:border-box;border:1px solid #93bfe9"></div>
<div class="r" style="left:161.20000000000002px;top:504.2px;width:9px;height:2.2px;background:#fff;"></div>
<div class="r" style="left:229.9px;top:504.2px;width:10px;height:2.2px;background:#fff;"></div>
<div class="r" style="left:233.8px;top:500.3px;width:2.2px;height:10px;background:#fff;"></div>
<div class="t" style="left:187.80px;top:500.34px;font-size:12px;line-height:12px;color:#1f5c9a;font-weight:400;font-family:'Liberation Sans', sans-serif;transform:scaleX(0.9197);transform-origin:0 0;">52 %</div>
<div class="r" style="left:355px;top:87px;width:844px;height:510.5px;background:#fff;"></div>
<svg class="r" style="left:0;top:0" width="1200" height="599" viewBox="0 0 1200 599"><g stroke="#b8daea" stroke-width="1" stroke-dasharray="3 2.7" fill="none"><path d="M389 97.50 H1166" /><path d="M389 145.80 H1166" /><path d="M389 194.10 H1166" /><path d="M389 242.40 H1166" /><path d="M389 290.70 H1166" /><path d="M389 339.00 H1166" /><path d="M389 387.30 H1166" /><path d="M389 435.60 H1166" /><path d="M389 483.90 H1166" /><path d="M389 532.20 H1166" /><path d="M389 580.50 H1166" /><path d="M403.50 98.6 V581" /><path d="M481.41 98.6 V581" /><path d="M559.32 98.6 V581" /><path d="M637.23 98.6 V581" /><path d="M715.14 98.6 V581" /><path d="M793.05 98.6 V581" /><path d="M870.96 98.6 V581" /><path d="M948.87 98.6 V581" /><path d="M1026.78 98.6 V581" /><path d="M1104.69 98.6 V581" /></g><path d="M388 222.35 H1166" stroke="#2b78b6" stroke-width="1.4" fill="none"/><path d="M568.8 222.3 V219.3" stroke="#2266aa" stroke-width="1.3"/><path d="M636.5 222.3 V219.3" stroke="#2266aa" stroke-width="1.3"/><path d="M761.5 222.3 V219.3" stroke="#2266aa" stroke-width="1.3"/><path d="M800.0 222.3 V219.3" stroke="#2266aa" stroke-width="1.3"/><path d="M999.0 222.3 V219.3" stroke="#2266aa" stroke-width="1.3"/><path d="M1057.3 222.3 V219.3" stroke="#2266aa" stroke-width="1.3"/><path d="M1083.3 222.3 V219.3" stroke="#2266aa" stroke-width="1.3"/><path d="M1105.2 222.3 V219.3" stroke="#2266aa" stroke-width="1.3"/><path d="M1165.6 222.3 V219.3" stroke="#2266aa" stroke-width="1.3"/><path d="M388 341.4 H1166.5" stroke="#e6244b" stroke-width="1.5" fill="none"/><path d="M406.7 341.4 V346.7 M416.7 341.4 V344.2 M425.0 341.4 V337.1 M427.5 341.4 V344.2 M440.0 341.4 V344.2 M451.7 341.4 V344.2 M453.3 341.4 V339.6 M460.8 341.4 V337.1 M468.3 341.4 V346.7 M469.2 341.4 V337.1 M480.0 341.4 V344.7 M484.2 341.4 V337.1 M486.7 341.4 V337.1 M488.3 341.4 V346.7 M490.0 341.4 V345.2 M495.0 341.4 V337.3 M501.7 341.4 V344.2 M515.0 341.4 V344.2 M516.7 341.4 V344.2 M531.7 341.4 V344.2 M537.5 341.4 V344.2 M552.5 341.4 V345.7 M563.3 341.4 V344.2 M573.3 341.4 V345.7 M575.0 341.4 V345.7 M576.7 341.4 V345.2 M600.0 341.4 V344.2 M611.7 341.4 V344.2 M617.5 341.4 V337.1 M624.2 341.4 V344.2 M630.0 341.4 V337.1 M636.3 341.4 V335.1 M636.3 341.4 V345.2 M658.3 341.4 V344.2 M672.5 341.4 V344.2 M678.3 341.4 V337.1 M685.0 341.4 V344.2 M687.5 341.4 V344.2 M695.0 341.4 V344.2 M699.2 341.4 V344.2 M720.0 341.4 V337.1 M736.7 341.4 V337.6 M740.8 341.4 V344.2 M754.2 341.4 V337.1 M757.5 341.4 V344.2 M759.2 341.4 V344.2 M761.7 341.4 V344.2 M763.3 341.4 V337.1 M767.5 341.4 V337.1 M783.3 341.4 V344.2 M800.8 341.4 V337.1 M804.2 341.4 V337.1 M823.3 341.4 V337.1 M823.3 341.4 V344.2 M825.0 341.4 V344.2 M836.7 341.4 V337.6 M845.8 341.4 V335.6 M850.8 341.4 V337.1 M867.5 341.4 V344.2 M887.5 341.4 V333.6 M895.0 341.4 V337.1 M896.7 341.4 V337.1 M901.7 341.4 V344.2 M909.2 341.4 V344.2 M911.7 341.4 V344.2 M921.7 341.4 V337.1 M923.0 341.4 V337.1 M924.2 341.4 V337.1 M927.5 341.4 V344.2 M929.2 341.4 V335.6 M946.7 341.4 V337.1 M951.7 341.4 V344.2 M953.3 341.4 V344.2 M964.2 341.4 V344.2 M976.7 341.4 V344.2 M980.8 341.4 V337.1 M985.5 341.4 V338.1 M987.0 341.4 V344.2 M990.0 341.4 V344.2 M997.5 341.4 V344.2 M1000.8 341.4 V344.2 M1005.0 341.4 V337.1 M1011.7 341.4 V344.2 M1014.2 341.4 V344.2 M1035.0 341.4 V344.2 M1040.0 341.4 V337.1 M1048.3 341.4 V344.2 M1050.0 341.4 V344.2 M1055.0 341.4 V335.6 M1061.7 341.4 V344.2 M1076.7 341.4 V344.2 M1096.7 341.4 V335.6 M1100.0 341.4 V344.2 M1118.3 341.4 V344.2 M1138.3 341.4 V337.1 M1147.5 341.4 V344.2" stroke="#e6244b" stroke-width="1.1" fill="none"/><path d="M792.5 334 L797.3 338.8 L792.5 343.6 L787.7 338.8 Z" fill="#f5e900" stroke="#6f7db8" stroke-width="1"/></svg>
<div class="t" style="left:371.80px;top:139.10px;font-size:11.7px;line-height:11.7px;color:#3473b5;font-weight:400;font-family:'Liberation Sans', sans-serif;transform:scaleX(0.9448);transform-origin:0 0;">8.0</div>
<div class="t" style="left:371.80px;top:187.40px;font-size:11.7px;line-height:11.7px;color:#3473b5;font-weight:400;font-family:'Liberation Sans', sans-serif;transform:scaleX(0.9448);transform-origin:0 0;">6.0</div>
<div class="t" style="left:371.80px;top:235.70px;font-size:11.7px;line-height:11.7px;color:#3473b5;font-weight:400;font-family:'Liberation Sans', sans-serif;transform:scaleX(0.9448);transform-origin:0 0;">4.0</div>
<div class="t" style="left:371.80px;top:284.00px;font-size:11.7px;line-height:11.7px;color:#3473b5;font-weight:400;font-family:'Liberation Sans', sans-serif;transform:scaleX(0.9448);transform-origin:0 0;">2.0</div>
<div class="t" style="left:371.80px;top:332.30px;font-size:11.7px;line-height:11.7px;color:#3473b5;font-weight:400;font-family:'Liberation Sans', sans-serif;transform:scaleX(0.9448);transform-origin:0 0;">0.0</div>
<div class="t" style="left:369.00px;top:380.60px;font-size:11.7px;line-height:11.7px;color:#3473b5;font-weight:400;font-family:'Liberation Sans', sans-serif;transform:scaleX(0.9010);transform-origin:0 0;">-2.0</div>
<div class="t" style="left:369.00px;top:428.90px;font-size:11.7px;line-height:11.7px;color:#3473b5;font-weight:400;font-family:'Liberation Sans', sans-serif;transform:scaleX(0.9010);transform-origin:0 0;">-4.0</div>
<div class="t" style="left:369.00px;top:477.20px;font-size:11.7px;line-height:11.7px;color:#3473b5;font-weight:400;font-family:'Liberation Sans', sans-serif;transform:scaleX(0.9010);transform-origin:0 0;">-6.0</div>
<div class="t" style="left:369.00px;top:525.50px;font-size:11.7px;line-height:11.7px;color:#3473b5;font-weight:400;font-family:'Liberation Sans', sans-serif;transform:scaleX(0.9010);transform-origin:0 0;">-8.0</div>
<div class="t" style="left:362.70px;top:573.80px;font-size:11.7px;line-height:11.7px;color:#3473b5;font-weight:400;font-family:'Liberation Sans', sans-serif;transform:scaleX(0.9176);transform-origin:0 0;">-10.0</div>
<div class="r" style="left:356.3px;top:90px;width:32.5px;height:14px;box-sizing:border-box;border:1.4px solid #1f5f9f;border-radius:3px 0 0 3px;background:#fff"></div>
<svg class="r" style="left:388px;top:89.5px;" width="8" height="15" viewBox="0 0 8 15"><path d="M0 0 L7 7.5 L0 15 Z" fill="#1a5a9a"/></svg>
<div class="t" style="left:365.80px;top:90.00px;font-size:11.7px;line-height:11.7px;color:#3473b5;font-weight:400;font-family:'Liberation Sans', sans-serif;transform:scaleX(0.9649);transform-origin:0 0;">10.0</div>
<div class="t" style="left:379.80px;top:107.50px;font-size:11.7px;line-height:11.7px;color:#3473b5;font-weight:400;font-family:'Liberation Sans', sans-serif;">V</div>
<div class="t" style="left:1168.00px;top:139.10px;font-size:11.7px;line-height:11.7px;color:#e3173e;font-weight:400;font-family:'Liberation Sans', sans-serif;transform:scaleX(0.9659);transform-origin:0 0;">400.0</div>
<div class="t" style="left:1168.00px;top:187.40px;font-size:11.7px;line-height:11.7px;color:#e3173e;font-weight:400;font-family:'Liberation Sans', sans-serif;transform:scaleX(0.9659);transform-origin:0 0;">300.0</div>
<div class="t" style="left:1168.00px;top:235.70px;font-size:11.7px;line-height:11.7px;color:#e3173e;font-weight:400;font-family:'Liberation Sans', sans-serif;transform:scaleX(0.9659);transform-origin:0 0;">200.0</div>
<div class="t" style="left:1168.00px;top:284.00px;font-size:11.7px;line-height:11.7px;color:#e3173e;font-weight:400;font-family:'Liberation Sans', sans-serif;transform:scaleX(0.9659);transform-origin:0 0;">100.0</div>
<div class="t" style="left:1168.00px;top:332.30px;font-size:11.7px;line-height:11.7px;color:#e3173e;font-weight:400;font-family:'Liberation Sans', sans-serif;transform:scaleX(0.9202);transform-origin:0 0;">0.0</div>
<div class="t" style="left:1167.50px;top:380.60px;font-size:11.7px;line-height:11.7px;color:#e3173e;font-weight:400;font-family:'Liberation Sans', sans-serif;transform:scaleX(0.9428);transform-origin:0 0;">-100.0</div>
<div class="t" style="left:1167.50px;top:428.90px;font-size:11.7px;line-height:11.7px;color:#e3173e;font-weight:400;font-family:'Liberation Sans', sans-serif;transform:scaleX(0.9428);transform-origin:0 0;">-200.0</div>
<div class="t" style="left:1167.50px;top:477.20px;font-size:11.7px;line-height:11.7px;color:#e3173e;font-weight:400;font-family:'Liberation Sans', sans-serif;transform:scaleX(0.9428);transform-origin:0 0;">-300.0</div>
<div class="t" style="left:1167.50px;top:525.50px;font-size:11.7px;line-height:11.7px;color:#e3173e;font-weight:400;font-family:'Liberation Sans', sans-serif;transform:scaleX(0.9428);transform-origin:0 0;">-400.0</div>
<div class="t" style="left:1167.50px;top:573.80px;font-size:11.7px;line-height:11.7px;color:#e3173e;font-weight:400;font-family:'Liberation Sans', sans-serif;transform:scaleX(0.9428);transform-origin:0 0;">-500.0</div>
<div class="r" style="left:1166.8px;top:90px;width:31px;height:14px;box-sizing:border-box;border:1.4px solid #e3173e;border-radius:0 3px 3px 0;background:#fff"></div>
<svg class="r" style="left:1159px;top:89.5px;" width="8" height="15" viewBox="0 0 8 15"><path d="M8 0 L0.5 7.5 L8 15 Z" fill="#e3173e"/></svg>
<div class="t" style="left:1168.80px;top:90.00px;font-size:11.7px;line-height:11.7px;color:#e3173e;font-weight:400;font-family:'Liberation Sans', sans-serif;transform:scaleX(0.9556);transform-origin:0 0;">500.0</div>
<div class="t" style="left:1168.00px;top:107.20px;font-size:11.7px;line-height:11.7px;color:#e3173e;font-weight:400;font-family:'Liberation Sans', sans-serif;transform:scaleX(0.9489);transform-origin:0 0;">mV</div>
<svg class="r" style="left:1128px;top:108px;" width="26" height="26" viewBox="0 0 26 26"><path d="M11.5 12 L22.6 22.3" stroke="#0f5294" stroke-width="4.8"/><circle cx="8.7" cy="9.7" r="5.8" fill="#fff" stroke="#0f5294" stroke-width="3"/><path d="M8.7 6.4 V13 M5.4 9.7 H12" stroke="#0f5294" stroke-width="2.4"/></svg>
<div class="t" style="left:468.21px;top:584.20px;font-size:11.7px;line-height:11.7px;color:#333;font-weight:400;font-family:'Liberation Sans', sans-serif;transform:scaleX(0.9363);transform-origin:0 0;">-80.0</div>
<div class="t" style="left:546.12px;top:584.20px;font-size:11.7px;line-height:11.7px;color:#333;font-weight:400;font-family:'Liberation Sans', sans-serif;transform:scaleX(0.9363);transform-origin:0 0;">-60.0</div>
<div class="t" style="left:624.03px;top:584.20px;font-size:11.7px;line-height:11.7px;color:#333;font-weight:400;font-family:'Liberation Sans', sans-serif;transform:scaleX(0.9363);transform-origin:0 0;">-40.0</div>
<div class="t" style="left:701.94px;top:584.20px;font-size:11.7px;line-height:11.7px;color:#333;font-weight:400;font-family:'Liberation Sans', sans-serif;transform:scaleX(0.9363);transform-origin:0 0;">-20.0</div>
<div class="t" style="left:784.85px;top:584.20px;font-size:11.7px;line-height:11.7px;color:#333;font-weight:400;font-family:'Liberation Sans', sans-serif;transform:scaleX(0.9202);transform-origin:0 0;">0.0</div>
<div class="t" style="left:859.41px;top:584.20px;font-size:11.7px;line-height:11.7px;color:#333;font-weight:400;font-family:'Liberation Sans', sans-serif;transform:scaleX(0.9518);transform-origin:0 0;">20.0</div>
<div class="t" style="left:937.32px;top:584.20px;font-size:11.7px;line-height:11.7px;color:#333;font-weight:400;font-family:'Liberation Sans', sans-serif;transform:scaleX(0.9518);transform-origin:0 0;">40.0</div>
<div class="t" style="left:1015.23px;top:584.20px;font-size:11.7px;line-height:11.7px;color:#333;font-weight:400;font-family:'Liberation Sans', sans-serif;transform:scaleX(0.9518);transform-origin:0 0;">60.0</div>
<div class="t" style="left:1093.14px;top:584.20px;font-size:11.7px;line-height:11.7px;color:#333;font-weight:400;font-family:'Liberation Sans', sans-serif;transform:scaleX(0.9518);transform-origin:0 0;">80.0</div>
<div class="r" style="left:369.4px;top:580.4px;width:34px;height:20px;box-sizing:border-box;border:1.3px solid #1f5f9f;border-radius:3px;"></div>
<svg class="r" style="left:381px;top:572.5px;" width="15" height="9" viewBox="0 0 15 9"><path d="M0 8.5 L7.5 0.5 L15 8.5 Z" fill="#1a5a9a"/></svg>
<div class="t" style="left:386.60px;top:583.94px;font-size:12px;line-height:12px;color:#333;font-weight:400;font-family:'Liberation Sans', sans-serif;transform:scaleX(0.9423);transform-origin:0 0;">-100.0 μs</div>
<div class="t" style="left:362.70px;top:573.80px;font-size:11.7px;line-height:11.7px;color:#3473b5;font-weight:400;font-family:'Liberation Sans', sans-serif;transform:scaleX(0.9176);transform-origin:0 0;">-10.0</div>
</body></html>
